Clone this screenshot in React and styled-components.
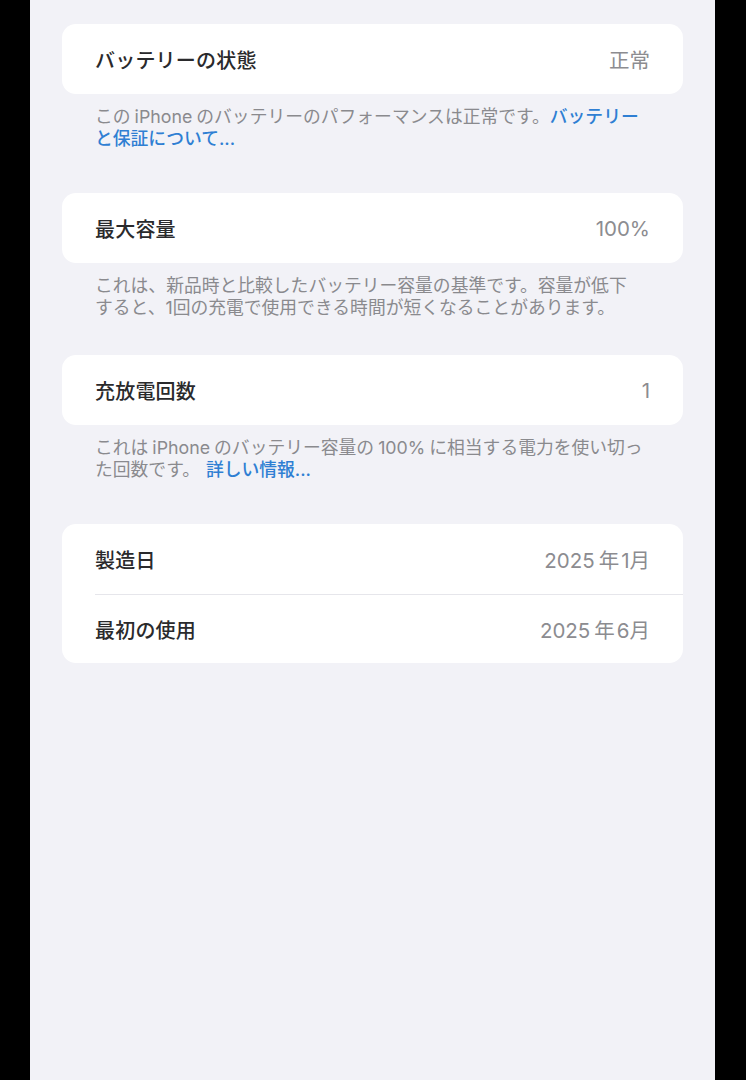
import React from 'react';
import styled, {createGlobalStyle} from 'styled-components';

const GlobalStyle = createGlobalStyle`
    html, body {
        margin: 0;
        padding: 0;
        background: #000;
    }
    body {
        font-family: Inter, "Noto Sans CJK JP", "Noto Sans", sans-serif;
        -webkit-font-smoothing: antialiased;
    }
`;

const Frame = styled.div`
    display: flex;
    min-height: 1080px;
    padding-left: 30px;
    padding-right: 31px;
`;

const Screen = styled.main`
    flex: 1;
    background: #f2f2f7;
    padding: 24px 32px 0 32px;
`;

const Section = styled.section`
    margin-bottom: ${props => props.gap || 0}px;
`;

const Group = styled.div`
    background: #fff;
    border-radius: 14px;
    overflow: hidden;
`;

const Row = styled.div`
    display: flex;
    align-items: center;
    justify-content: space-between;
    height: 70px;
    padding: 0 33px;
    box-sizing: border-box;
    & + & {
        height: 69px;
        border-top: 1px solid #e6e6eb;
        margin-left: 33px;
        padding-left: 0;
    }
`;

const Label = styled.span`
    font-size: 20px;
    font-weight: 500;
    color: #2a2a2c;
    letter-spacing: 0.2px;
`;

const Value = styled.span`
    font-size: 20.5px;
    color: #8c8c90;
`;

const Footnote = styled.p`
    margin: 12px 0 0 0;
    padding: 0 33px;
    font-size: 17.8px;
    line-height: 22px;
    color: #8a8a8e;
    white-space: nowrap;
`;

const Link = styled.a`
    color: #2f7fd3;
    text-decoration: none;
    font-weight: 500;
`;

const Gap = styled.span`
    display: inline-block;
    width: ${props => props.w || 4}px;
`;

const App = () => (
    <Frame>
        <GlobalStyle />
        <Screen>
            <Section gap={43}>
                <Group>
                    <Row>
                        <Label>バッテリーの状態</Label>
                        <Value>正常</Value>
                    </Row>
                </Group>
                <Footnote>
                    この<Gap />iPhone<Gap />のバッテリーのパフォーマンスは正常です。<Link href="#">バッテリー</Link>
                    <br />
                    <Link href="#">と保証について...</Link>
                </Footnote>
            </Section>

            <Section gap={36}>
                <Group>
                    <Row>
                        <Label>最大容量</Label>
                        <Value>100%</Value>
                    </Row>
                </Group>
                <Footnote>
                    これは、新品時と比較したバッテリー容量の基準です。容量が低下
                    <br />
                    すると、1回の充電で使用できる時間が短くなることがあります。
                </Footnote>
            </Section>

            <Section gap={43}>
                <Group>
                    <Row>
                        <Label>充放電回数</Label>
                        <Value>1</Value>
                    </Row>
                </Group>
                <Footnote>
                    これは<Gap />iPhone<Gap />のバッテリー容量の<Gap />100%<Gap />に相当する電力を使い切っ
                    <br />
                    た回数です。<Gap w={6} /><Link href="#">詳しい情報...</Link>
                </Footnote>
            </Section>

            <Section>
                <Group>
                    <Row>
                        <Label>製造日</Label>
                        <Value>2025<Gap />年<Gap w={2} />1月</Value>
                    </Row>
                    <Row>
                        <Label>最初の使用</Label>
                        <Value>2025<Gap />年<Gap w={2} />6月</Value>
                    </Row>
                </Group>
            </Section>
        </Screen>
    </Frame>
);

export default App;
